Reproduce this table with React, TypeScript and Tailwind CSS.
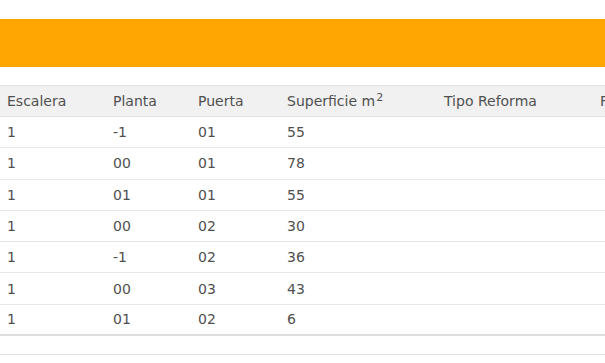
import React from "react";

const rows = [
  ["1", "-1", "01", "55"],
  ["1", "00", "01", "78"],
  ["1", "01", "01", "55"],
  ["1", "00", "02", "30"],
  ["1", "-1", "02", "36"],
  ["1", "00", "03", "43"],
  ["1", "01", "02", "6"],
];

const cols = ["w-[106px]", "w-[85px]", "w-[89px]", "w-[157px]", "w-[156px]", "w-[120px]"];

const App: React.FC = () => {
  return (
    <div className="w-[605px] h-[363px] overflow-hidden bg-white text-[#505050] font-['DejaVu_Sans',sans-serif] text-[14px]">
      {/* Banner */}
      <div className="h-[19px]" />
      <div className="h-[48px] bg-[#ffa602]" />
      <div className="h-[18px]" />

      {/* Table */}
      <div className="w-[725px]">
        <div className="flex h-[32px] items-center bg-[#f1f1f1] border-t border-b border-[#e3e3e3] pt-[1px]">
          {["Escalera", "Planta", "Puerta"].map((h, i) => (
            <div key={h} className={`${cols[i]} shrink-0 pl-[7px] whitespace-nowrap`}>{h}</div>
          ))}
          <div className={`${cols[3]} shrink-0 pl-[7px] whitespace-nowrap`}>
            Superficie m<sup className="text-[11px] -top-[5px] ml-[1px]">2</sup>
          </div>
          <div className={`${cols[4]} shrink-0 pl-[7px] whitespace-nowrap`}>Tipo Reforma</div>
          <div className={`${cols[5]} shrink-0 pl-[7px] whitespace-nowrap`}>Fecha</div>
        </div>
        {rows.map((r, i) => (
          <div
            key={i}
            className={`flex h-[31.3px] items-center pt-[1px] ${i === rows.length - 1 ? "border-b-2 border-[#dedede]" : "border-b border-[#e8e8e8]"}`}
          >
            {r.map((c, j) => (
              <div key={j} className={`${cols[j]} shrink-0 pl-[7px]`}>{c}</div>
            ))}
            <div className={`${cols[4]} shrink-0`} />
            <div className={`${cols[5]} shrink-0`} />
          </div>
        ))}
        <div className="h-[19px] border-b border-[#e3e3e3]" />
      </div>
    </div>
  );
};

export default App;
